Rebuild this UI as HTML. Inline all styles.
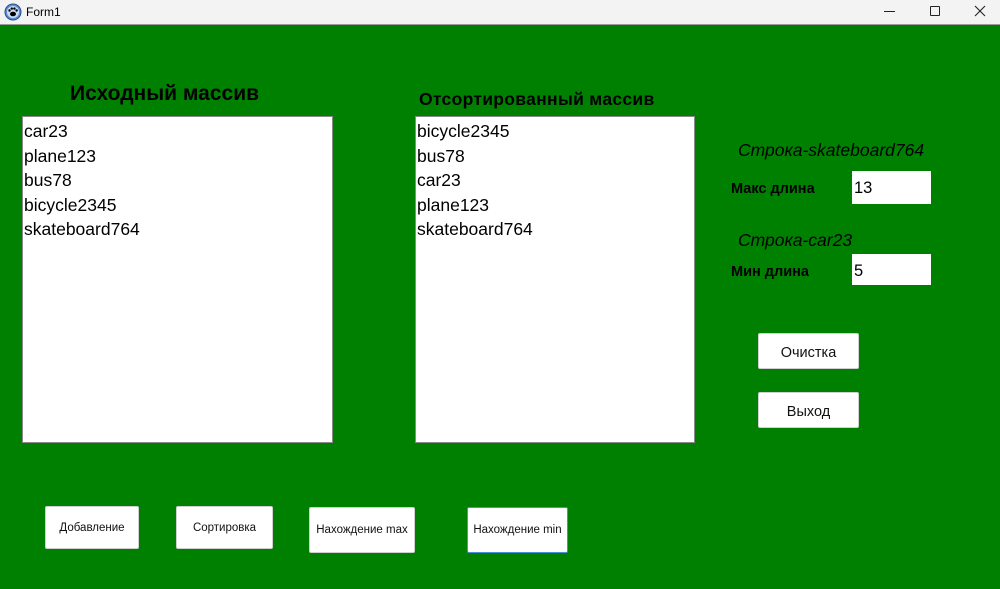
<!DOCTYPE html>
<html><head><meta charset="utf-8"><style>
*{margin:0;padding:0;box-sizing:border-box}
body{width:1000px;height:589px;overflow:hidden;font-family:"Liberation Sans","DejaVu Sans",sans-serif;background:#008000;position:relative}
.tb{position:absolute;left:0;top:0;width:1000px;height:25px;background:#f3f3f3;border-bottom:1px solid #9a9a9a}
.a{position:absolute}
.list{position:absolute;background:#fff;border:1px solid #8a8a8a;font-size:17.5px;line-height:24.6px;padding:2px 0 0 1px;color:#000}
.btn{position:absolute;background:#fff;border:1px solid #d0d0d0;border-radius:2px;font-size:11.5px;display:flex;align-items:center;justify-content:center;color:#111}
.h{font-weight:bold;color:#000}
.it{font-style:italic;font-size:17.5px;color:#000}
.box{position:absolute;background:#fff;font-size:16.5px;padding:8px 0 0 2px;color:#000}
</style></head><body>
<div class="tb">
<svg class="a" style="left:4px;top:3px" width="18" height="18" viewBox="0 0 18 18"><circle cx="9" cy="9" r="8" fill="#5b8fd6" stroke="#2a4d86"/><circle cx="9" cy="9" r="6" fill="#c9dcf2"/><ellipse cx="9" cy="11" rx="3" ry="2.3" fill="#000"/><circle cx="5.5" cy="7.5" r="1.2"/><circle cx="7.8" cy="5.6" r="1.2"/><circle cx="10.4" cy="5.6" r="1.2"/><circle cx="12.6" cy="7.5" r="1.2"/></svg>
<div class="a" style="left:26px;top:5px;font-size:12px;color:#000">Form1</div>
<div class="a" style="left:884px;top:11px;width:11px;height:1px;background:#222"></div>
<div class="a" style="left:930px;top:6px;width:10px;height:10px;border:1px solid #222;border-radius:1px"></div>
<svg class="a" style="left:974px;top:5px" width="12" height="12" viewBox="0 0 12 12"><path d="M1 1L11 11M11 1L1 11" stroke="#222" stroke-width="1.1"/></svg>
</div>

<div class="a h" style="left:70px;top:82px;font-size:21px">Исходный массив</div>
<div class="a h" style="left:419px;top:89px;font-size:17.5px;letter-spacing:0.3px">Отсортированный массив</div>

<div class="list" style="left:22px;top:116px;width:311px;height:327px">car23<br>plane123<br>bus78<br>bicycle2345<br>skateboard764</div>
<div class="list" style="left:415px;top:116px;width:280px;height:327px">bicycle2345<br>bus78<br>car23<br>plane123<br>skateboard764</div>

<div class="a it" style="left:738px;top:140px">Строка-skateboard764</div>
<div class="a h" style="left:731px;top:181px;font-size:14.5px">Макс длина</div>
<div class="box" style="left:852px;top:171px;width:79px;height:33px">13</div>
<div class="a it" style="left:738px;top:230px">Строка-car23</div>
<div class="a h" style="left:731px;top:264px;font-size:14.5px">Мин длина</div>
<div class="box" style="left:852px;top:254px;width:79px;height:31px">5</div>

<div class="btn" style="left:758px;top:333px;width:101px;height:36px;font-size:14.5px;padding-top:3px">Очистка</div>
<div class="btn" style="left:758px;top:392px;width:101px;height:36px;font-size:14.5px;padding-top:3px">Выход</div>

<div class="btn" style="left:45px;top:506px;width:94px;height:43px">Добавление</div>
<div class="btn" style="left:176px;top:506px;width:97px;height:43px">Сортировка</div>
<div class="btn" style="left:309px;top:507px;width:106px;height:46px">Нахождение max</div>
<div class="btn" style="left:467px;top:507px;width:101px;height:46px;border-color:#4a90d9">Нахождение min</div>
</body></html>
